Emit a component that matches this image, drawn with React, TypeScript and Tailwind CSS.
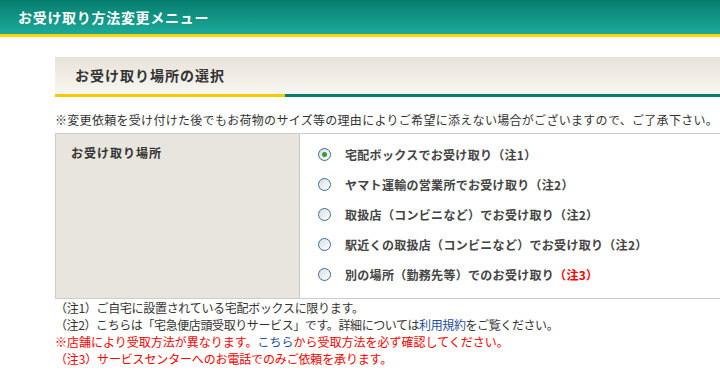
import { ReactNode } from "react";

const font = { fontFamily: '"Noto Sans CJK JP", "Liberation Sans", sans-serif' };

type Option = { label: ReactNode; checked?: boolean };

const options: Option[] = [
  { label: "宅配ボックスでお受け取り（注1）", checked: true },
  { label: "ヤマト運輸の営業所でお受け取り（注2）" },
  { label: "取扱店（コンビニなど）でお受け取り（注2）" },
  { label: "駅近くの取扱店（コンビニなど）でお受け取り（注2）" },
  {
    label: (
      <>
        別の場所（勤務先等）でのお受け取り
        <span className="text-[#ff0000]">（注3）</span>
      </>
    ),
  },
];

const Radio = ({ checked }: { checked?: boolean }) => (
  <span className="flex h-[13px] w-[13px] shrink-0 items-center justify-center rounded-full border border-[#3f6c96] bg-gradient-to-br from-[#d8dde3] to-white">
    {checked && <span className="h-[5px] w-[5px] rounded-full bg-[#2fa02f]" />}
  </span>
);

const App = () => {
  return (
    <div className="h-[376px] w-full overflow-hidden bg-white text-[#333]" style={font}>
      <div className="h-[34px] bg-gradient-to-b from-[#067e6e] to-[#1caa9b] pl-[18px] text-[14px] font-bold leading-[34px] tracking-[0.7px] text-white">
        お受け取り方法変更メニュー
      </div>
      <div className="h-[3px] bg-[#ffd400]" />

      <div className="ml-[55px] mt-[20px] w-[700px]">
        <div className="h-[37px] bg-gradient-to-b from-[#e8e3d8] to-[#f8f6f2] pl-[20px] text-[14px] font-bold leading-[36px] tracking-[1px] text-[#333]">
          お受け取り場所の選択
        </div>
        <div className="flex h-[3px]">
          <div className="w-[230px] bg-[#f8c800]" />
          <div className="flex-1 bg-[#00826f]" />
        </div>

        <p className="mt-[14px] text-[12px] leading-[17px] tracking-[0.3px]">
          ※変更依頼を受け付けた後でもお荷物のサイズ等の理由によりご希望に添えない場合がございますので、ご了承下さい。
        </p>

        <div className="mt-[5px] flex border border-[#cccccc]">
          <div className="w-[244px] shrink-0 border-r border-[#cccccc] bg-[#e8e5df] pl-[15px] pt-[10px] text-[12px] font-bold leading-[17px] tracking-[1px]">
            お受け取り場所
          </div>
          <div className="flex-1 pb-[9px] pl-[18px] pt-[5px]">
            {options.map((o, i) => (
              <div key={i} className="flex h-[30px] items-center gap-[14px]">
                <Radio checked={o.checked} />
                <span className="text-[12px] font-bold leading-[17px] tracking-[0.3px] text-[#444]">
                  {o.label}
                </span>
              </div>
            ))}
          </div>
        </div>

        <div className="text-[12px] leading-[17px]">
          <p className="tracking-[-0.3px]">（注1）ご自宅に設置されている宅配ボックスに限ります。</p>
          <p className="tracking-[-0.4px]">
            （注2）こちらは「宅急便店頭受取りサービス」です。詳細については
            <span className="text-[#1f4c9c]">利用規約</span>をご覧ください。
          </p>
          <p className="text-[#ff0000]">
            ※店舗により受取方法が異なります。
            <span className="text-[#1f4c9c]">こちら</span>から受取方法を必ず確認してください。
          </p>
          <p className="tracking-[-0.15px] text-[#ff0000]">
            （注3）サービスセンターへのお電話でのみご依頼を承ります。
          </p>
        </div>
      </div>
    </div>
  );
};

export default App;
